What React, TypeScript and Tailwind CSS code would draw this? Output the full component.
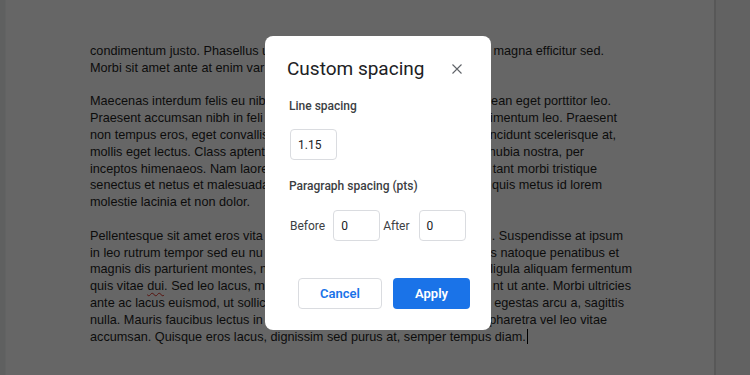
import React from "react";

type Line = { left: string; right?: string; w?: string; typo?: boolean; caret?: boolean };

// what shows of the document around the dialog; w = where the right part ends
const lines: Line[] = [
  { left: "condimentum justo. Phasellus u", right: "magna efficitur sed.", w: "w-[514px]" },
  { left: "Morbi sit amet ante at enim var" },
  { left: "" },
  { left: "Maecenas interdum felis eu nib", right: "ean eget porttitor leo.", w: "w-[521px]" },
  { left: "Praesent accumsan nibh in feli", right: "imentum leo. Praesent", w: "w-[527px]" },
  { left: "non tempus eros, eget convallis", right: "ncidunt scelerisque at,", w: "w-[526px]" },
  { left: "mollis eget lectus. Class aptent", right: "nubia nostra, per", w: "w-[494px]" },
  { left: "inceptos himenaeos. Nam laore", right: "tant morbi tristique", w: "w-[507px]" },
  { left: "senectus et netus et malesuada", right: "quis metus id lorem", w: "w-[512px]" },
  { left: "molestie lacinia et non dolor." },
  { left: "" },
  { left: "Pellentesque sit amet eros vita", right: ". Suspendisse at ipsum", w: "w-[533px]" },
  { left: "in leo rutrum tempor sed eu nu", right: "s natoque penatibus et", w: "w-[529px]" },
  { left: "magnis dis parturient montes, n", right: "ligula aliquam fermentum", w: "w-[542px]" },
  { left: "quis vitae ", typo: true, right: "nt ut ante. Morbi ultricies", w: "w-[541px]" },
  { left: "ante ac lacus euismod, ut sollic", right: "egestas arcu a, sagittis", w: "w-[534px]" },
  { left: "nulla. Mauris faucibus lectus in", right: "pharetra vel leo vitae", w: "w-[517px]" },
  { left: "accumsan. Quisque eros lacus, dignissim sed purus at, semper tempus diam.", caret: true },
];

function DocLine({ line }: { line: Line }) {
  if (!line.left) return <div className="h-[16.8px]" />;
  const left = line.typo ? (
    <span className="shrink-0">
      quis vitae{" "}
      <span className="underline decoration-wavy decoration-[#d93025] decoration-1 underline-offset-2">dui</span>
      . Sed leo lacus, m
    </span>
  ) : (
    <span className="shrink-0">{line.left}</span>
  );
  if (!line.right)
    return (
      <div className="flex h-[16.8px] items-center whitespace-nowrap">
        {left}
        {line.caret && <span className="ml-px inline-block h-[15px] w-px bg-black" />}
      </div>
    );
  return (
    <div className={`flex h-[16.8px] items-center justify-between whitespace-nowrap ${line.w}`}>
      {left}
      <span className="shrink-0">{line.right}</span>
    </div>
  );
}

function NumberBox({ value }: { value: string }) {
  return (
    <div className="flex h-[31px] w-[47px] items-center rounded-[4px] border border-[#dadce0] bg-white pl-[7px] text-[12px] text-[#202124]">
      {value}
    </div>
  );
}

export default function App() {
  return (
    <div className="relative flex h-[375px] w-[750px] overflow-hidden bg-[#eef0f0]">
      {/* document page */}
      <div className="ml-[5px] w-px bg-[#f6f7f7]" />
      <div className="h-full w-[710px] border-r-2 border-[#dcdcdc] bg-white pl-[84px] pt-[43px] font-['Liberation_Sans',Arial,sans-serif] text-[12.7px] leading-[16.8px] text-[#1e1e1e]">
        {lines.map((l, i) => (
          <DocLine key={i} line={l} />
        ))}
      </div>
      <div className="flex-1 bg-[#f5f5f5]" />

      {/* backdrop + dialog */}
      <div className="absolute inset-0 bg-black/60 pl-[265px] pt-[36px]">
        <div className="flex h-[294px] w-[226px] flex-col rounded-[8px] bg-white pb-[21px] pt-[21px] font-['Roboto',Arial,sans-serif]">
          <div className="flex h-[24px] items-center justify-between pl-[22px] pr-[29px]">
            <h2 className="text-[19px] font-normal leading-[24px] text-[#202124]">Custom spacing</h2>
            <svg width="10" height="10" viewBox="0 0 10 10" className="text-[#5f6368]">
              <path d="M0.5 0.5 L9.5 9.5 M9.5 0.5 L0.5 9.5" stroke="currentColor" strokeWidth="1.1" />
            </svg>
          </div>

          <div className="pl-[24px]">
            <div className="mt-[17px] text-[12px] font-medium leading-[16px] text-[#3c4043]">Line spacing</div>
            <div className="mt-[15px] ml-px">
              <NumberBox value="1.15" />
            </div>

            <div className="mt-[18px] text-[12px] font-medium leading-[16px] text-[#3c4043]">
              Paragraph spacing (pts)
            </div>
            <div className="mt-[16px] flex h-[31px] items-center text-[12px] text-[#3c4043]">
              <span className="ml-px">Before</span>
              <div className="ml-[8px]">
                <NumberBox value="0" />
              </div>
              <span className="ml-[3px]">After</span>
              <div className="ml-[9px]">
                <NumberBox value="0" />
              </div>
            </div>
          </div>

          <div className="mt-auto flex gap-[11px] pl-[33px]">
            <button className="h-[31px] w-[84px] rounded-[4px] border border-[#dadce0] bg-white text-[13px] font-semibold text-[#1a73e8]">
              Cancel
            </button>
            <button className="h-[31px] w-[77px] rounded-[4px] bg-[#1a73e8] text-[13px] font-semibold text-white">
              Apply
            </button>
          </div>
        </div>
      </div>
    </div>
  );
}
